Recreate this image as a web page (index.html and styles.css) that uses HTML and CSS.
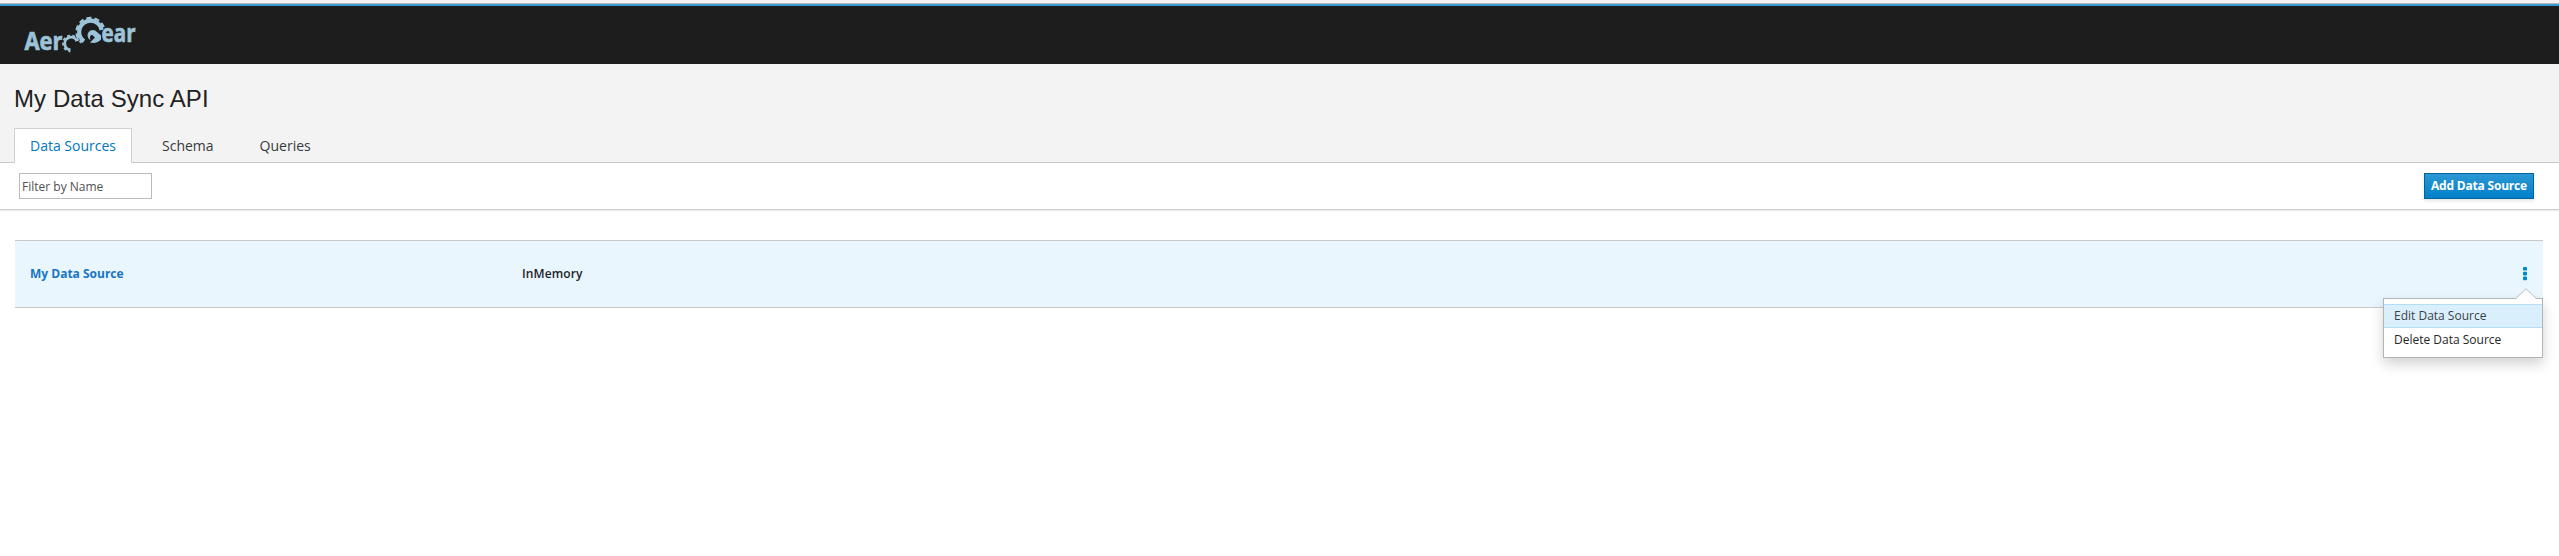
FILE: index.html
```html
<!DOCTYPE html>
<html lang="en">
<head>
<meta charset="utf-8">
<title>My Data Sync API</title>
<link rel="stylesheet" href="styles.css">
</head>
<body>
<header class="masthead">
  <svg class="logo" width="130" height="50" viewBox="15 10 130 50" role="img" aria-label="AeroGear">
    <g fill="#9cc3d8" stroke="#9cc3d8" stroke-width=".7">
      <text class="logo-text" x="24.500" y="49.700" textLength="38" lengthAdjust="spacingAndGlyphs">Aer</text>
      <text class="logo-text" x="101.500" y="41.700" textLength="34" lengthAdjust="spacingAndGlyphs">ear</text>
    </g>
    <g fill="none" stroke="#9cc3d8">
      <path d="M76.900 41.300A6.300 6.300 0 1 0 70.500 49.800" stroke-width="2.800"/>
      <path d="M78.500 40.800A8 8 0 1 0 70.300 51.500" stroke-width="1.800" stroke-dasharray="3 2.300"/>
      <path d="M101.600 30A11.300 11.300 0 1 0 84 41.300" stroke-width="4.200"/>
      <path d="M103.700 27.200A14 14 0 1 0 81.500 42.700" stroke-width="2.400" stroke-dasharray="5 3"/>
    </g>
    <path fill="#9cc3d8" d="M97 32A5.300 5.300 0 1 0 90.500 40Q88.800 36 92 34.800L95 37.500L93 39.500L90 42.500Q97 44 101 39.500L101 35.500Z"/>
  </svg>
</header>
<section class="heading">
  <h1>My Data Sync API</h1>
  <nav class="tabs">
    <a class="tab active">Data Sources</a>
    <a class="tab">Schema</a>
    <a class="tab queries">Queries</a>
  </nav>
</section>
<div class="toolbar">
  <input class="filter" type="text" placeholder="Filter by Name">
  <button class="add">Add Data Source</button>
</div>
<main class="row">
  <div class="name">My Data Source</div>
  <div class="type">InMemory</div>
  <div class="actions">
    <svg class="kebab" width="4" height="14" viewBox="0 0 4 14" fill="#0088ce"><rect width="4" height="3.6" rx=".8"/><rect y="4.800" width="4" height="3.600" rx=".8"/><rect y="9.600" width="4" height="3.600" rx=".8"/></svg>
    <div class="menu">
      <svg class="arrow" width="22" height="12" viewBox="0 0 22 12"><path d="M0 12L1 10.500L11 .7L21 10.500L22 12Z" fill="#fff"/><path d="M.5 10.800L11 .7L21.500 10.800" fill="none" stroke="#bbb"/></svg>
      <a class="item selected">Edit Data Source</a>
      <a class="item">Delete Data Source</a>
    </div>
  </div>
</main>
</body>
</html>
```
FILE: styles.css
```css
* { box-sizing: border-box; }
body { margin: 0; background: #fff; color: #292929; font: 12px/20px "Open Sans", sans-serif; min-height: 556px; }
.masthead { height: 64px; background: linear-gradient(#f2f2f2 3px, #bbb6b2 3px, #bbb6b2 4px, #39a5dc 4px, #2e93c9 6px, #1d1d1d 6px); padding: 10px 15px; }
.logo { display: block; }
.logo-text { font: 700 25px "Open Sans", sans-serif; }
.heading { height: 99px; background: #f3f3f3; border-bottom: 1px solid #c8c8c8; padding: 21px 14px 0; }
h1 { margin: 0 0 16px; font: 400 24px/27px "Liberation Sans", Arial, sans-serif; letter-spacing: .08px; color: #222; }
.tabs { display: flex; height: 35px; }
.tab { padding: 7px 15px; border: 1px solid transparent; font-size: 14px; line-height: 20px; color: #363a40; }
.tab.active { width: 118px; margin-right: 14px; background: #fff; border-color: #d1d1d1; border-bottom: 0; color: #0077c0; }
.queries { margin-left: 14px; }
.toolbar { height: 47px; border-bottom: 1px solid #ccc; box-shadow: 0 1px 1px #eee; display: flex; justify-content: space-between; padding: 10px 25px 0 19px; }
.filter { width: 133px; height: 26px; border: 1px solid #bbb; padding: 0 2px; font: 12px "Open Sans", sans-serif; border-radius: 0; }
.filter::placeholder { color: #505050; opacity: 1; }
.add { width: 110px; height: 26px; border: 1px solid #00659c; background: linear-gradient(#2d98d5, #007fc8); color: #fff; font: 700 12px/20px "Open Sans", sans-serif; letter-spacing: -.2px; padding: 0; box-shadow: 0 2px 3px rgba(3,3,3,.1); white-space: nowrap; }
.row { margin: 30px 16px 0 15px; height: 68px; background: #e9f6fe; border: solid #c8c8c8; border-width: 1px 0; display: flex; align-items: center; position: relative; }
.name { width: 507px; padding-left: 15px; font-weight: 700; color: #1874c4; }
.type { flex: 1; font-weight: 600; letter-spacing: .1px; color: #1f2328; }
.actions { padding-right: 16px; display: flex; }
.menu { position: absolute; right: 0; top: 57px; width: 160px; height: 60px; background: #fff; border: 1px solid #b4b4b4; padding: 5px 0; box-shadow: 0 6px 12px rgba(0,0,0,.175); }
.arrow { position: absolute; right: 5px; top: -11px; }
.item { display: block; height: 24px; padding: 1px 10px; border: solid transparent; border-width: 1px 0; line-height: 20px; color: #262626; }
.item.selected { background: #d9effc; border-color: #b5def5; color: #3b4249; }
```
